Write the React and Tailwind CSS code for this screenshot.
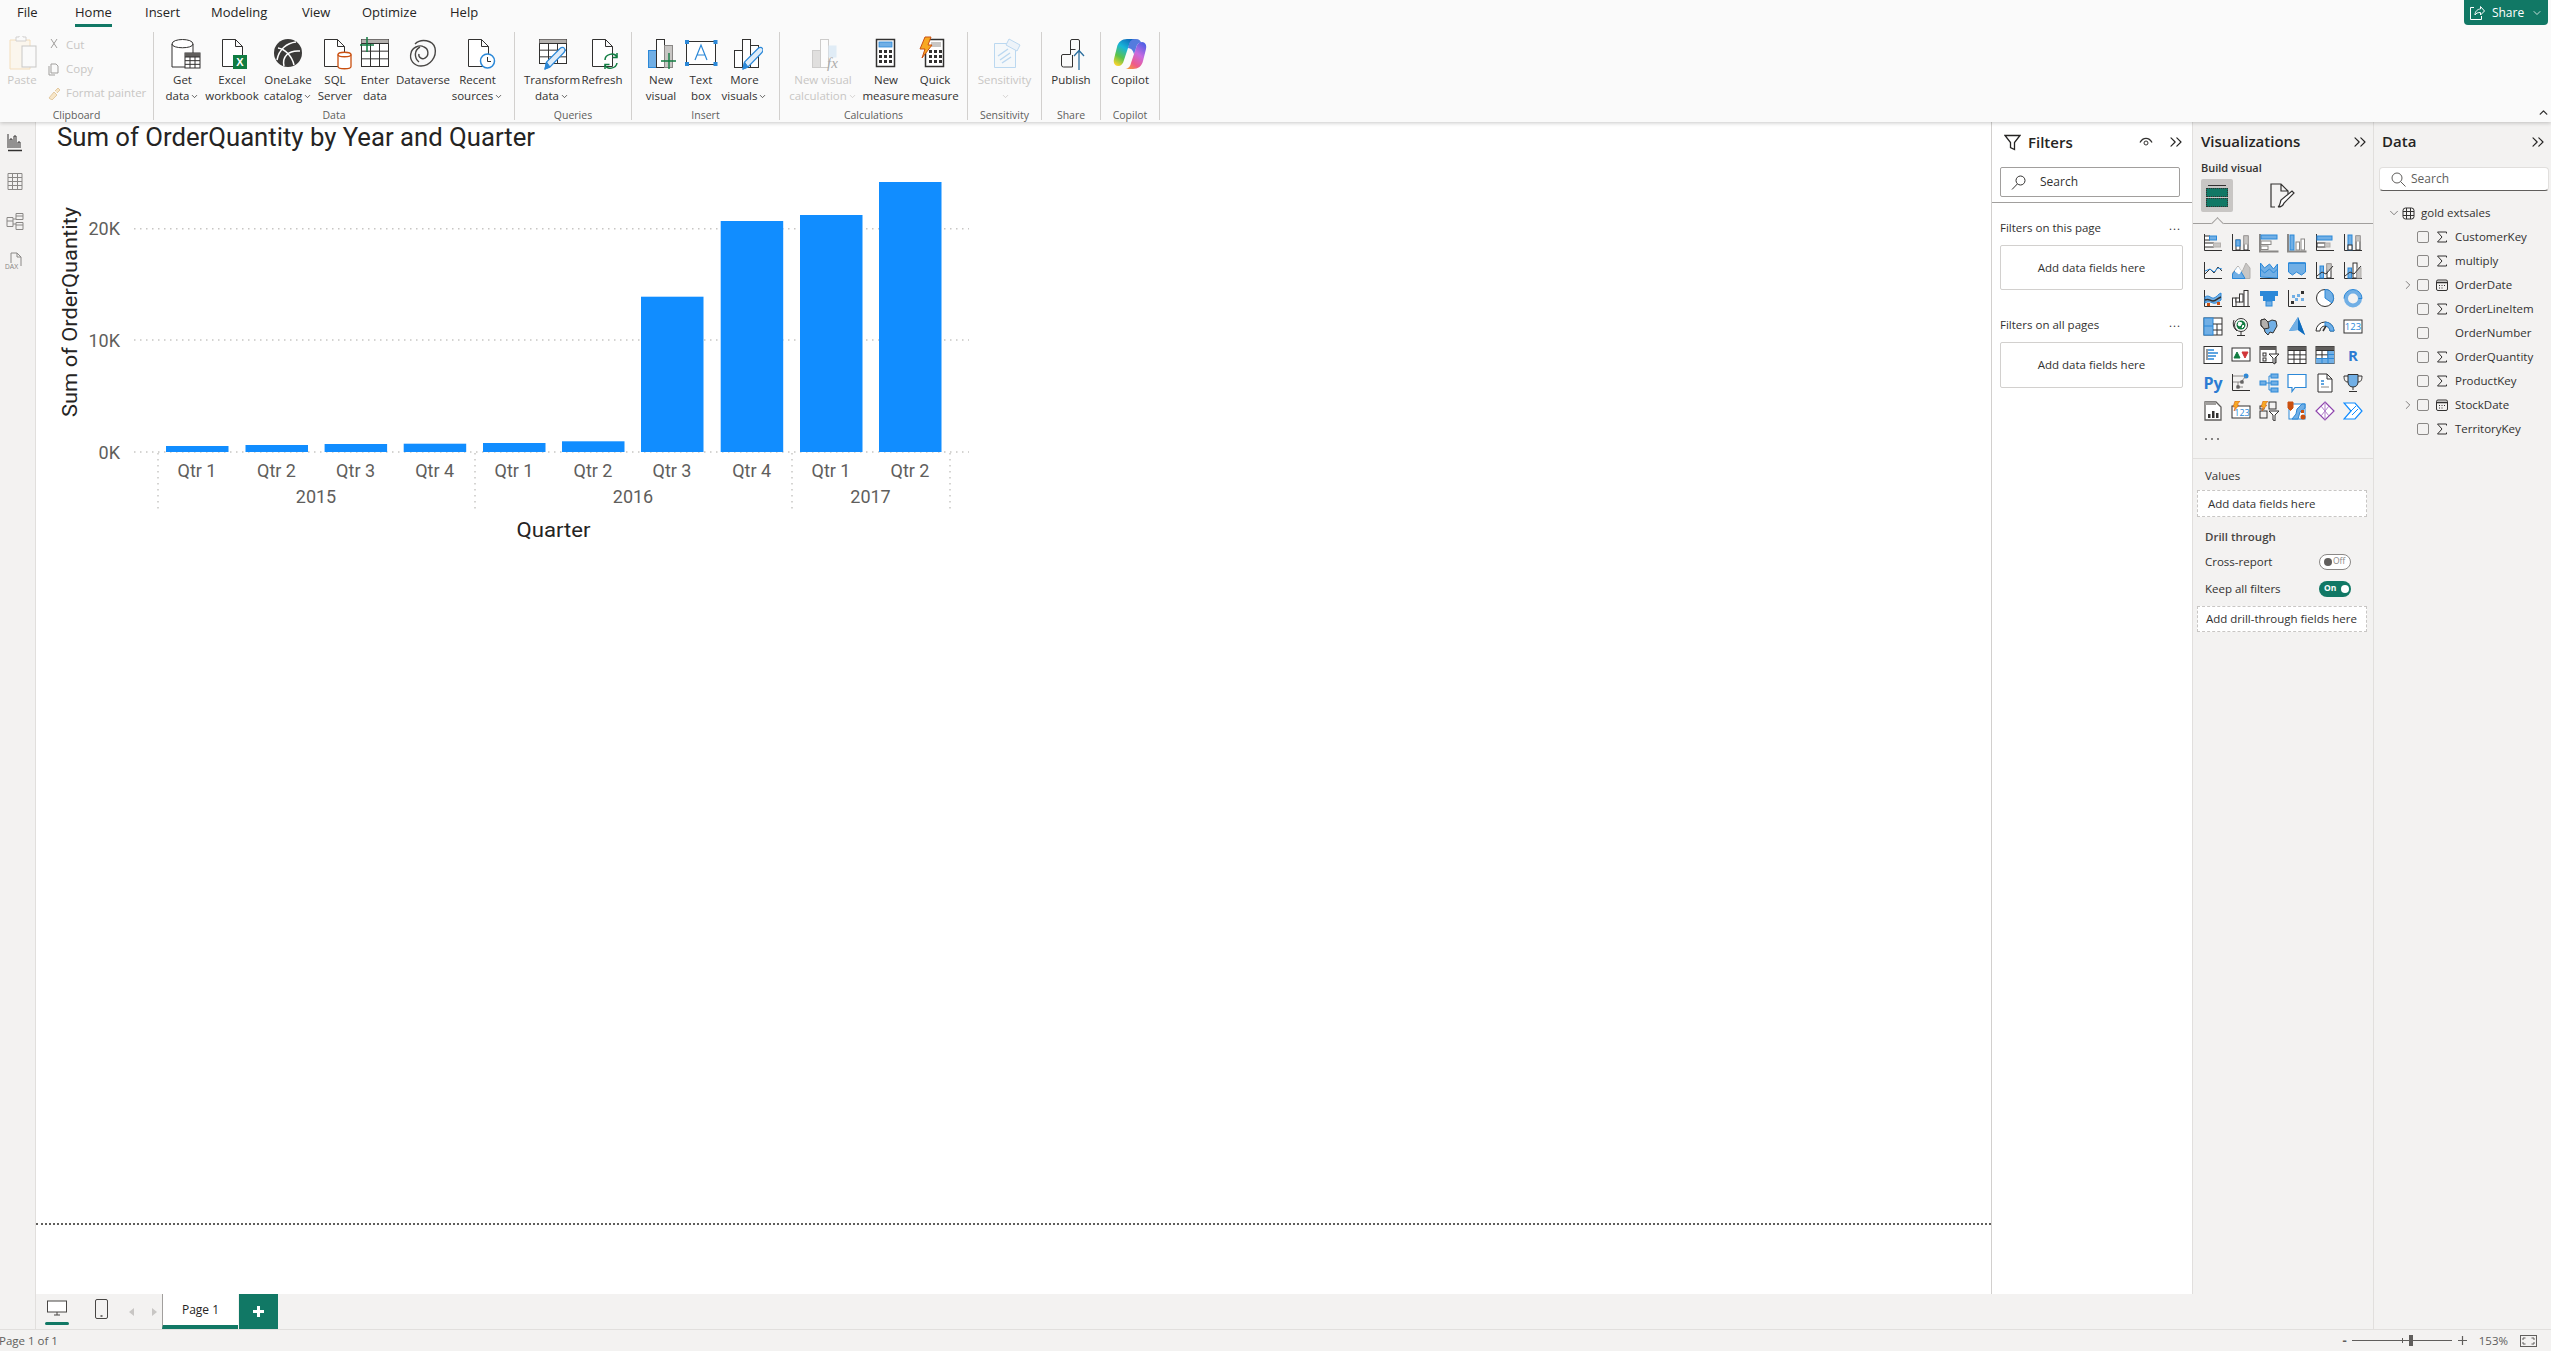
import React from "react";
import { ChevronsRight, ChevronRight, ChevronDown, ChevronUp } from "lucide-react";

const D = "#323130", B = "#2b88d8", L = "#71afe5", G = "#b3b0ad", W = "#ffffff";
const R = ({ x, y, w, h, f = "none", s = D, sw = 1, rx }) => <rect x={x} y={y} width={w} height={h} fill={f} stroke={s} strokeWidth={sw} rx={rx} />;
const P = ({ d, f = "none", s = D, sw = 1 }) => <path d={d} fill={f} stroke={s} strokeWidth={sw} />;

const Ic = ({ children, op }) => (
  <svg width="36" height="36" viewBox="0 0 36 36" fill="none" opacity={op}>{children}</svg>
);
const Doc = ({ x = 8.5 }) => <P d={`M${x} 3.5h13l7 7v20h-20z M${x + 13} 3.5v7h7`} f={W} />;
const TableG = ({ x, y, w, h, head = "#b3b0ad", c = 3, r = 3 }) => {
  const cols = Array.from({ length: c - 1 }, (_, i) => x + ((i + 1) * w) / c);
  const rows = Array.from({ length: r }, (_, i) => y + 4 + (i * (h - 4)) / r);
  return (
    <g>
      <R x={x} y={y} w={w} h={h} f={W} />
      <rect x={x} y={y} width={w} height={4} fill={head} />
      {cols.map((v) => <path key={v} d={`M${v} ${y + 4}V${y + h}`} stroke={D} />)}
      {rows.map((v) => <path key={v} d={`M${x} ${v}H${x + w}`} stroke={D} />)}
    </g>
  );
};
const Pencil = ({ dx = 0, dy = 0 }) => (
  <g transform={`translate(${dx} ${dy})`}>
    <P d="M10 33l1.500-7L25 12.500c1.500-1.500 3.500-1.500 4.500 0s.5 3-1 4.500L15 31z" f="#deecf9" s="#2b88d8" sw="1.200" />
    <P d="M10 33l1.500-7 3.500 5z" f="#2b88d8" s="#2b88d8" />
  </g>
);

const icons = {
  getdata: <Ic><P d="M7 8c0-6 21-6 21 0v23H7z" f={W} /><P d="M7 8c0 5 21 5 21 0" /><TableG x={20} y={17} w={15} h={15} head="#605e5c" /></Ic>,
  excel: <Ic><Doc /><rect x="19" y="19" width="14" height="14" fill="#107c41" /><text x="26" y="30" fontSize="11" fontWeight="700" fill={W} textAnchor="middle" fontFamily="Liberation Sans">X</text></Ic>,
  onelake: <Ic><circle cx="18" cy="17" r="14" fill="#3b3a39" /><P d="M7 24C9 13 17 7 26 6M14 30c-2-9 4-16 16-15M8 12c7 1 14 8 16 17" s={W} sw="1.500" /></Ic>,
  sql: <Ic><Doc x={7.5} /><P d="M21 18.500c0-3 13-3 13 0v12c0 3-13 3-13 0z" f={W} s="#ca5010" sw="1.300" /><P d="M21 18.500c0 3 13 3 13 0" s="#ca5010" sw="1.300" /></Ic>,
  enter: <Ic><TableG x={4.500} y={3.500} w={27} h={27} c={3} r={3} /><P d="M10 1v15M3 9h14" s="#107c41" sw="1.500" /></Ic>,
  dataverse: <Ic><P d="M10 8c6-6 18-4 20 4 2 9-5 18-14 18-7 0-12-6-10-13 1-5 8-9 13-6 5 2 5 9 1 11-3 2-7-1-6-4" s="#484644" sw="1.400" /><P d="M14 26c-5-4-5-12 1-15" s="#484644" sw="1.400" /></Ic>,
  recent: <Ic><Doc /><circle cx="27.500" cy="25" r="7" fill={W} stroke="#2b88d8" strokeWidth="1.500" /><P d="M27.500 21v4.500h3.500" s={D} /></Ic>,
  transform: <Ic><TableG x={5.500} y={3.500} w={27} h={24} c={3} r={3} /><Pencil dx={1} dy={0} /></Ic>,
  refresh: <Ic><Doc /><P d="M21 24c0-6 9-8 12-3M33 27c-1 6-10 7-12 2" s="#107c41" sw="1.500" /><P d="M33 17v4.500h-4.500M21 33v-4.500h4.500" s="#107c41" sw="1.500" /></Ic>,
  paste: <Ic op="0.55"><g transform="translate(3 -4)"><P d="M3 8h20v29H3z" f="#fdf3e3" s="#f0c98a" /><P d="M9 8V5h3c0-3 4-3 4 0h3v4H9z" f="#fafafa" s="#b3b0ad" /><R x={15} y={14} w={14} h={21} f="#fafafa" s="#a19f9d" /></g></Ic>,
  newvisual: <Ic><R x={5.500} y={14.500} w={8} h={17} f={L} s="#2b88d8" /><R x={13.500} y={3.500} w={8} h={28} f={W} /><R x={21.500} y={9.500} w={8} h={22} f="#c8c6c4" s="#8a8886" /><P d="M26 17v16M18 25h15" s="#107c41" sw="1.400" /></Ic>,
  textbox: <Ic><R x={3.500} y={5.500} w={29} h={23} f={W} /><rect x="2" y="4" width="4" height="4" fill="#2b88d8" /><rect x="30.500" y="4" width="4" height="4" fill="#2b88d8" /><rect x="2" y="26" width="4" height="4" fill="#2b88d8" /><rect x="30.500" y="26" width="4" height="4" fill="#2b88d8" /><P d="M12 24l6-15 6 15M14.500 19h7" s="#2b88d8" sw="1.200" /></Ic>,
  more: <Ic><R x={7.500} y={14.500} w={8} h={17} f={W} /><R x={15.500} y={3.500} w={8} h={28} f={W} /><R x={23.500} y={9.500} w={8} h={22} f={W} /><Pencil dx={6} dy={0} /></Ic>,
  calc: <Ic op="0.5"><R x={7.500} y={14.500} w={8} h={17} f="#c8c6c4" s="#a19f9d" /><R x={15.500} y={3.500} w={8} h={28} f={W} s="#a19f9d" /><path d="M23.500 9.500h8v12h-8z" fill="#c7e0f4" /><text x="22" y="32" fontSize="15" fontStyle="italic" fill="#605e5c" fontFamily="Liberation Serif">fx</text></Ic>,
  measure: <Ic><R x={8.500} y={3.500} w={18} h={27} f={W} sw="1.500" /><rect x="11" y="6" width="13" height="5" fill={L} stroke="#2b88d8" strokeWidth="0.800" />{[14, 19, 24].flatMap((y) => [11, 16, 21].map((x) => <rect key={`${x}${y}`} x={x} y={y} width="3" height="3" fill={D} />))}</Ic>,
  quick: <Ic><R x={8.500} y={3.500} w={18} h={27} f={W} sw="1.500" /><rect x="14" y="6" width="10" height="5" fill="#c8c6c4" />{[14, 19, 24].flatMap((y) => [12, 17, 22].map((x) => <rect key={`${x}${y}`} x={x} y={y} width="3" height="3" fill={D} />))}<P d="M8 1h6l-3 8h4L5 22l3-9H3z" f="#f7a823" s="#ca5010" /></Ic>,
  sens: <Ic op="0.45"><P d="M7.500 7.500h21v24h-21z" f="#eff6fc" s={L} /><P d="M11 20l10-7M13 24l10-7M15 27l9-6" s={L} sw="1.500" /><P d="M22 3l11 6-3 6-11-6z" f="#deecf9" s={L} /></Ic>,
  publish: <Ic><P d="M17.500 14V5a1.500 1.500 0 011.500-1.500h6a1.500 1.500 0 011.500 1.500v11" /><P d="M8.500 20a1.500 1.500 0 011.500-1.500h7.500v-5h5M8.500 20v9a2 2 0 002 2h9v-12" /><P d="M26 34V15M21 20l5-5.500 5 5.500" s="#2b6e9e" sw="1.300" /></Ic>,
  copilot: (
    <svg width="36" height="36" viewBox="0 0 36 36">
      <defs>
        <linearGradient id="cpa" x1="0.700" y1="0" x2="0.200" y2="1"><stop offset="0" stopColor="#0f6cbd" /><stop offset="0.350" stopColor="#18b6d8" /><stop offset="0.700" stopColor="#5cc24a" /><stop offset="1" stopColor="#f6d32c" /></linearGradient>
        <linearGradient id="cpb" x1="0.800" y1="0" x2="0.200" y2="1"><stop offset="0" stopColor="#4f5fe6" /><stop offset="0.400" stopColor="#c86be0" /><stop offset="0.750" stopColor="#ef5a8a" /><stop offset="1" stopColor="#f59a3b" /></linearGradient>
      </defs>
      <path d="M15 3h9c-4 0-6 2-7 6l-5 15c-1 4-3 6-6 6-3 0-5-3-4-7l3-12c1-5 5-8 10-8z" fill="url(#cpa)" />
      <path d="M21 33h-9c4 0 6-2 7-6l5-15c1-4 3-6 6-6 3 0 5 3 4 7l-3 12c-1 5-5 8-10 8z" fill="url(#cpb)" />
      <path d="M15 3h9c3 0 5 2 5 4-2-1-4 1-5 5l-2 6c-1-4-3-6-6-6l1-4c1-3 2-5 5-5z" fill="#2a5bd7" opacity="0.800" />
    </svg>
  ),
};

const Item = ({ w, icon, l1, l2, caret, off }) => (
  <div className={`${w} flex flex-col items-center shrink-0 pt-[4px]`}>
    <div className="h-[36px]">{icons[icon]}</div>
    <div className={`text-[11.5px] leading-[16px] whitespace-nowrap ${off ? "text-[#c8c6c4]" : "text-[#323130]"}`}>{l1}</div>
    <div className={`flex items-center h-[16px] text-[11.5px] leading-[16px] whitespace-nowrap ${off ? "text-[#c8c6c4]" : "text-[#323130]"}`}>
      {l2}
      {caret && <ChevronDown size={9} strokeWidth={2} className="ml-[1px]" />}
    </div>
  </div>
);

const Group = ({ w, pl = "", label, children }) => (
  <div className={`${w} shrink-0 h-[88px] border-r border-[#d2d0ce] flex flex-col`}>
    <div className={`h-[78px] flex ${pl}`}>{children}</div>
    <div className="h-[10px] leading-[11px] text-[10.5px] text-center text-[#605e5c]">{label}</div>
  </div>
);

const Ribbon = () => (
  <header className="relative z-10 h-[122px] shrink-0 bg-[#fafafa] shadow-[0_1px_4px_rgba(0,0,0,0.22)]">
    <div className="h-[32px] flex items-start pl-[17px] text-[13px] text-[#252423]">
      <div className="w-[58px] leading-[24px]">File</div>
      <div className="w-[70px]"><span className="inline-block h-[27px] leading-[24px] border-b-[3px] border-[#117865] font-medium">Home</span></div>
      <div className="w-[66px] leading-[24px]">Insert</div>
      <div className="w-[91px] leading-[24px]">Modeling</div>
      <div className="w-[60px] leading-[24px]">View</div>
      <div className="w-[88px] leading-[24px]">Optimize</div>
      <div className="leading-[24px]">Help</div>
      <div className="ml-auto mr-[3px] w-[84px] h-[25px] rounded-b-[4px] bg-[#117865] text-white flex items-center justify-center gap-[7px] text-[12px]">
        <svg width="16" height="16" viewBox="0 0 16 16" fill="none" stroke="#fff"><path d="M5 2.500H1.500v12h11V11M6 10c0-4 3-6 5.500-6V1.500L15.500 6l-4 4V7.500C9 7.500 7 8 6 10z" /></svg>
        <span>Share</span>
        <ChevronDown size={12} strokeWidth={1.500} />
      </div>
    </div>
    <div className="flex h-[88px]">
      <Group w="w-[154px]" label="Clipboard">
        <div className="w-[44px] flex flex-col items-center pt-[4px]">
          <div className="h-[36px]">{icons.paste}</div>
          <div className="text-[11.5px] leading-[16px] text-[#c8c6c4]">Paste</div>
        </div>
        <div className="flex flex-col text-[11.5px] text-[#c8c6c4] pt-[2px] pl-[4px] gap-[2px]">
          {[
            ["Cut", <P key="c" d="M3 1l6 9M9 1L3 10" s="#a19f9d" />],
            ["Copy", <P key="d" d="M3 2h5l2 2v7H3zM1 4v9h6" s="#a19f9d" />],
            ["Format painter", <P key="p" d="M1 12l5-6 3 3-5 5zM7 5l3-3 2 2-3 3" s="#e3c9a0" f="#f7e6c8" />],
          ].map(([t, ic]) => (
            <div key={t} className="flex items-center h-[22px] gap-[4px] whitespace-nowrap">
              <svg width="14" height="14" viewBox="0 0 14 14" fill="none">{ic}</svg>
              <span>{t}</span>
            </div>
          ))}
        </div>
      </Group>
      <Group w="w-[361px]" pl="pl-[4px]" label="Data">
        <Item w="w-[49px]" icon="getdata" l1="Get" l2="data" caret />
        <Item w="w-[50px]" icon="excel" l1="Excel" l2="workbook" />
        <Item w="w-[62px]" icon="onelake" l1="OneLake" l2="catalog" caret />
        <Item w="w-[32px]" icon="sql" l1="SQL" l2="Server" />
        <Item w="w-[48px]" icon="enter" l1="Enter" l2="data" />
        <Item w="w-[48px]" icon="dataverse" l1="Dataverse" />
        <Item w="w-[61px]" icon="recent" l1="Recent" l2="sources" caret />
      </Group>
      <Group w="w-[117px]" pl="pl-[5px]" label="Queries">
        <Item w="w-[64px]" icon="transform" l1="Transform" l2="data" caret />
        <Item w="w-[36px]" icon="refresh" l1="Refresh" />
      </Group>
      <Group w="w-[148px]" pl="pl-[9px]" label="Insert">
        <Item w="w-[40px]" icon="newvisual" l1="New" l2="visual" />
        <Item w="w-[40px]" icon="textbox" l1="Text" l2="box" />
        <Item w="w-[47px]" icon="more" l1="More" l2="visuals" caret />
      </Group>
      <Group w="w-[188px]" pl="pl-[6px]" label="Calculations">
        <Item w="w-[74px]" icon="calc" l1="New visual" l2="calculation" caret off />
        <Item w="w-[52px]" icon="measure" l1="New" l2="measure" />
        <Item w="w-[46px]" icon="quick" l1="Quick" l2="measure" />
      </Group>
      <Group w="w-[74px]" pl="justify-center" label="Sensitivity">
        <Item w="w-[70px]" icon="sens" l1="Sensitivity" l2="" caret off />
      </Group>
      <Group w="w-[59px]" pl="justify-center" label="Share">
        <Item w="w-[50px]" icon="publish" l1="Publish" />
      </Group>
      <Group w="w-[59px]" pl="justify-center" label="Copilot">
        <Item w="w-[50px]" icon="copilot" l1="Copilot" />
      </Group>
      <div className="ml-auto self-end pr-[1px] pb-[1px]"><ChevronUp size={13} strokeWidth={2.500} className="text-[#323130]" /></div>
    </div>
  </header>
);

const Rail = () => (
  <div className="w-[36px] shrink-0 bg-[#f3f2f1] border-r border-[#e1dfdd] flex flex-col items-center pr-[5px] pt-[10px] gap-[19px]">
    <svg width="20" height="20" viewBox="0 0 20 20" fill="none" stroke="#323130"><path d="M3 2v14M5 16V7h2v9M9 16V4h2v12M13 16v-6h2v6" /><path d="M3 18.500h14" strokeWidth="1.500" /></svg>
    <svg width="20" height="21" viewBox="0 0 20 21" fill="none" stroke="#8a8886"><path d="M3 2.500h14v16H3zM3 6.500h14M3 10.500h14M3 14.500h14M7.500 2.500v16M12.500 2.500v16" /></svg>
    <svg width="20" height="21" viewBox="0 0 20 21" fill="none" stroke="#8a8886"><path d="M2 6.500h6v9H2zM11 2.500h7v6h-7zM11 11.500h7v7h-7zM2 10h6M11 5h7M11 14h7M8 8h3M8 13h3" /></svg>
    <svg width="20" height="20" viewBox="0 0 20 20" fill="none" stroke="#8a8886"><path d="M6 12V2h6l4 4v9M12 2v4h4" /><text x="0" y="18" fontSize="6.500" fill="#8a8886" stroke="none" fontFamily="Liberation Sans">DAX</text></svg>
  </div>
);

const bars = [
  [166, 446, "Qtr 1"], [245.500, 445, "Qtr 2"], [324.600, 444, "Qtr 3"], [403.700, 443.700, "Qtr 4"],
  [483, 443, "Qtr 1"], [562, 441.300, "Qtr 2"], [641, 296.700, "Qtr 3"], [720.700, 221, "Qtr 4"],
  [800, 215, "Qtr 1"], [879, 182, "Qtr 2"],
];

const Chart = () => (
  <svg width="1000" height="420" viewBox="36 122 1000 420" className="block" fontFamily="Roboto, sans-serif">
    <text x="57" y="146" fontSize="25" fill="#252423" textLength="478" lengthAdjust="spacingAndGlyphs">Sum of OrderQuantity by Year and Quarter</text>
    <text transform="translate(77 312) rotate(-90)" fontSize="19.500" fill="#252423" textAnchor="middle" textLength="210" lengthAdjust="spacingAndGlyphs">Sum of OrderQuantity</text>
    {[[228.700, "20K"], [340, "10K"], [452, "0K"]].map(([y, t]) => (
      <g key={t}>
        <path d={`M134 ${y}H969`} stroke="#c8c6c4" strokeWidth="1.500" strokeDasharray="1.500 4.500" />
        <text x="120" y={y + 6.500} fontSize="18" fill="#605e5c" textAnchor="end">{t}</text>
      </g>
    ))}
    {[158, 475, 792, 950].map((x) => <path key={x} d={`M${x} 453V513`} stroke="#c8c6c4" strokeWidth="1.500" strokeDasharray="1.500 4.500" />)}
    {bars.map(([x, y, t], i) => (
      <g key={i}>
        <rect x={x} y={y} width="62.500" height={452 - y} fill="#118dff" />
        <text x={x + 31} y="477" fontSize="18" fill="#605e5c" textAnchor="middle">{t}</text>
      </g>
    ))}
    {[[316, "2015"], [633, "2016"], [870.500, "2017"]].map(([x, t]) => <text key={t} x={x} y="503" fontSize="18" fill="#605e5c" textAnchor="middle">{t}</text>)}
    <text x="553.500" y="537" fontSize="20" fill="#252423" textAnchor="middle" textLength="74" lengthAdjust="spacingAndGlyphs">Quarter</text>
  </svg>
);

const Filters = () => (
  <aside className="w-[201px] shrink-0 bg-white border-l border-[#d2d0ce]">
    <div className="h-[40px] flex items-center pl-[12px] pr-[6px] text-[#252423]">
      <svg width="17" height="17" viewBox="0 0 17 17" fill="none" stroke="#252423" strokeWidth="1.300"><path d="M1 1.500h15l-5.500 7v7l-4-2v-5z" /></svg>
      <span className="ml-[7px] text-[15px] font-semibold">Filters</span>
      <svg className="ml-auto mr-[12px]" width="16" height="12" viewBox="0 0 16 12" fill="none" stroke="#323130"><path d="M2 6.500C5 1 11 1 14 6.500" strokeWidth="1.300" /><circle cx="8" cy="7" r="2" /></svg>
      <ChevronsRight size={20} strokeWidth={1.400} className="text-[#252423]" />
    </div>
    <div className="mt-[5px] mx-[8px] w-[180px] h-[30px] rounded-[2px] border border-[#a19f9d] flex items-center pl-[10px] text-[12px] text-[#323130]">
      <svg width="15" height="15" viewBox="0 0 15 15" fill="none" stroke="#323130"><circle cx="9.500" cy="5.500" r="4.500" /><path d="M6.300 9L1 14.500" /></svg>
      <span className="ml-[14px]">Search</span>
    </div>
    <div className="mt-[5px] h-px bg-[#a19f9d]" />
    <div className="mt-[16px] h-[18px] px-[8px] flex justify-between items-center text-[11.5px] text-[#323130]">
      <span>Filters on this page</span><span className="tracking-[1px] -mt-[4px] mr-[3px]">...</span>
    </div>
    <div className="mt-[8px] mx-[8px] w-[183px] h-[45px] bg-white border border-[#d2d0ce] rounded-[2px] flex items-center justify-center text-[11.5px] text-[#323130]">Add data fields here</div>
    <div className="mt-[26px] h-[18px] px-[8px] flex justify-between items-center text-[11.5px] text-[#323130]">
      <span>Filters on all pages</span><span className="tracking-[1px] -mt-[4px] mr-[3px]">...</span>
    </div>
    <div className="mt-[8px] mx-[8px] w-[183px] h-[46px] bg-white border border-[#d2d0ce] rounded-[2px] flex items-center justify-center text-[11.5px] text-[#323130]">Add data fields here</div>
  </aside>
);

const Ax = () => <P d="M1.500 1v16.500H19" />;
const viz = [
  <><Ax /><R x={1.500} y={3} w={5} h={4} f={W} /><R x={6.500} y={3} w={7} h={4} f={L} s={B} /><R x={1.500} y={10} w={9} h={4} f={W} /><R x={10.500} y={10} w={7} h={4} f="#c8c6c4" s={G} /></>,
  <><Ax /><R x={5} y={7} w={4} h={10} f={W} /><R x={5} y={7} w={4} h={6} f={L} s={B} /><R x={13} y={3} w={4} h={14} f={W} /><R x={13} y={3} w={4} h={8} f="#c8c6c4" s={G} /></>,
  <><P d="M1 1v17.500h18.500" s="#8a8886" sw={2} /><rect x="2" y="2" width="16" height="4" fill={L} stroke={B} /><R x={2} y={8} w={10} h={3.500} f="#fff" s="#8a8886" /><R x={2} y={13} w={7} h={3.500} f="#fff" s="#8a8886" /></>,
  <><P d="M1 1v17.500h18.500" s="#8a8886" sw={2} /><rect x="3" y="2" width="4" height="15" fill={L} stroke={B} /><R x={9} y={9} w={3.500} h={8} f="#fff" s="#8a8886" /><R x={14} y={6} w={3.500} h={11} f="#fff" s="#8a8886" /></>,
  <><Ax /><rect x="2" y="3" width="15" height="4" fill={L} stroke={B} /><R x={2} y={10} w={8} h={4} f="#fff" /><R x={10} y={10} w={5} h={4} f="#c8c6c4" s={G} /></>,
  <><Ax /><rect x="5" y="2" width="4" height="15" fill={L} stroke={B} /><R x={5} y={12} w={4} h={5} f="#fff" /><R x={13} y={3} w={4} h={14} f="#fff" /><R x={13} y={3} w={4} h={5} f="#c8c6c4" s={G} /></>,
  <><Ax /><P d="M2 13l5-5 4 4 4-6 4 4" s={D} /><P d="M2 10l5-2 4 3 4-4 4 1" s={B} /></>,
  <><P d="M1 17.500h18" /><P d="M1.500 17.500V12L7 5l4 6 4-9 4 5v10.500z" f="#c8c6c4" s={G} /><P d="M1.500 17.500V13L7 6l5 8 2 3.500z" f={L} s={B} /><P d="M4 10l3-4 3 4-2 3z" f={W} s={W} /></>,
  <><P d="M1 17.500h18" /><P d="M1.500 16V2l4 5 5-4 4 5 4-5v14z" f={L} s={B} /><P d="M1.500 8l4 4 5-4 4 4 4-4" s={B} /></>,
  <><P d="M1 17.500h18" /><P d="M1.500 2h17v9l-4 3-5-3-4 3-4-3z" f={L} s={B} /><P d="M1.500 2h17" s={B} sw={1.500} /></>,
  <><Ax /><rect x="5" y="5" width="3.500" height="12" fill={L} stroke={B} /><R x={12} y={3} w={4} h={14} f="#fff" /><R x={12} y={3} w={4} h={6} f="#c8c6c4" s={G} /><P d="M2 15l5-4 4 2 7-8" /></>,
  <><Ax /><rect x="5" y="7" width="3.500" height="10" fill={L} stroke={B} /><R x={10} y={2} w={4} h={15} f="#fff" /><R x={14} y={7} w={4} h={10} f="#c8c6c4" s={G} /><P d="M2 15l5-4 4 2 7-8" /></>,
  <><Ax /><P d="M2 8c4-3 6 2 9 1s4-4 7-5v7c-3 2-5 4-8 3s-4-2-8 0z" f={L} s={B} /><P d="M2 11c4-2 5 1 8 1s5-3 8-4" s={D} sw={1.500} /><rect x="4" y="14" width="3" height="3" fill="#ca5010" /><rect x="14" y="13" width="3" height="3" fill="#ca5010" /></>,
  <><P d="M1 17.500h18" /><R x={1.500} y={9} w={3.500} h={8.500} f="#fff" /><R x={5} y={9} w={3.500} h={4} f="#fff" /><R x={8.500} y={5} w={3.500} h={8} f="#fff" /><R x={13} y={1.500} w={4} h={16} f="#fff" /></>,
  <><rect x="1" y="2" width="18" height="5" fill={B} /><rect x="4" y="7" width="12" height="5" fill={B} /><rect x="7" y="12" width="6" height="5" fill={L} stroke={B} /></>,
  <><Ax /><rect x="14" y="2" width="3" height="3" fill={D} /><rect x="10" y="5" width="3" height="3" fill={L} /><rect x="5" y="6" width="3" height="3" fill={L} /><rect x="14" y="9" width="3" height="3" fill={L} /><rect x="8" y="9" width="3" height="3" fill={L} /><rect x="4" y="12" width="3" height="3" fill={D} /></>,
  <><circle cx="10" cy="9" r="8.500" fill="#fff" stroke={D} /><P d="M10 9V.500A8.500 8.500 0 0117 14z" f={L} s={B} /></>,
  <><circle cx="10" cy="9.500" r="7" fill="none" stroke={L} strokeWidth="4" /><P d="M10 .500a9 9 0 019 9h-3.500" s={B} /><P d="M1 9.500a9 9 0 019-9" s={B} /></>,
  <><R x={1} y={1} w={18} h={17} f="#fff" /><rect x="1" y="1" width="9" height="17" fill={L} stroke={B} /><P d="M1 9h9" s={B} /><P d="M10 7h9M14 7v11M10 13h9" /></>,
  <><circle cx="10" cy="8" r="6.500" fill="#fff" stroke={D} /><circle cx="10" cy="8" r="4.500" fill="#107c41" /><P d="M8 5l3 1-2 3-2-1zM12 8l1 1-2 2z" f="#fff" s="#fff" /><P d="M10 15v3M6 18.500h8M3 3a9 9 0 003 11" /></>,
  <><P d="M2 3l4-1 3 3 4-2 4 1 1 5-4 7-3-1-2 3-3-3-1-4-3-2z" f={L} s={D} /><P d="M2 3l4-1 3 3 1 6-5 1-3-4z" f={G} s={D} /></>,
  <><P d="M11 0L18 18 11 13 2 14z" f={B} s="none" /><P d="M11 0v13l7 5z" f="#0f6cbd" s="none" /><P d="M11 0L2 14l9-1z" f={L} s="none" /></>,
  <><P d="M1 14a9 9 0 0118 0h-4a5 5 0 00-10 0z" f="#fff" /><P d="M10 5a9 9 0 019 9h-4a5 5 0 00-5-5z" f={L} s={B} /><P d="M8 14l3-5" sw={1.500} /></>,
  <><R x={1} y={3} w={18} h={13} f="#fff" /><text x="10" y="13" fontSize="9.500" textAnchor="middle" fill={B} fontFamily="Open Sans">123</text></>,
  <><R x={1} y={1.500} w={18} h={17} f="#fff" /><path d="M5 5h6M5 8h10M5 11h8M5 14h6" stroke={B} strokeWidth="1.500" /><path d="M4 4v11" stroke={D} /></>,
  <><R x={1} y={3} w={18} h={13} f="#fff" /><P d="M3 13l3-6 3 6z" f="#107c41" s="#107c41" /><P d="M11 7h6l-3 6z" f="#d13438" s="#d13438" /></>,
  <><R x={1} y={1.500} w={16} h={16} f="#fff" /><rect x="1" y="1.500" width="16" height="3.500" fill="#605e5c" /><R x={4} y={8} w={3} h={3} /><R x={4} y={13} w={3} h={3} /><P d="M10 9h10l-4 4v6l-2-1v-5z" f="#fff" /></>,
  <><TableG x={1} y={1.500} w={18} h={17} head="#605e5c" c={3} r={3} /></>,
  <><TableG x={1} y={1.500} w={18} h={17} head="#605e5c" c={3} r={3} /><rect x="13" y="6" width="6" height="12" fill={L} /><rect x="1" y="13" width="18" height="5.500" fill={L} /><P d="M7 13v5.500M13 6v12.500M13 9.500h6M1 13.500h18" s={B} /></>,
  <><text x="10" y="15.500" fontSize="15" fontWeight="700" fill="#2b7cd3" textAnchor="middle" fontFamily="Open Sans">R</text></>,
  <><text x="10" y="15.500" fontSize="16" fontWeight="700" fill="#2b7cd3" textAnchor="middle" fontFamily="Open Sans">Py</text></>,
  <><Ax /><circle cx="15" cy="3" r="2.500" fill={B} /><P d="M2 3h10M2 9h8l5-6M7 9v5h5" s="#8a8886" /><R x={10} y={8} w={2} h={2} f="#fff" /><R x={6} y={13} w={2} h={2} f="#fff" /></>,
  <><rect x="1" y="8" width="6" height="4" fill={L} stroke={B} /><rect x="12" y="1" width="7" height="4" fill={L} stroke={B} /><rect x="12" y="8" width="7" height="4" fill={L} stroke={B} /><rect x="12" y="15" width="7" height="4" fill={L} stroke={B} /><P d="M7 10h5M10 3h2M10 17h2M10 3v14" s={B} /></>,
  <><P d="M1 1.500h18v13H8l-3 4v-4H1z" f="#fff" s={B} sw={1.200} /></>,
  <><P d="M3 1h9l5 5v13H3zM12 1v5h5" f="#fff" /><path d="M6 8h3M6 11h3" stroke={B} strokeWidth="1.500" /><path d="M6 14h8" stroke="#8a8886" /></>,
  <><P d="M5 1.500h10V9c0 3-2 5-5 5s-5-2-5-5z" f={L} s={D} /><P d="M5 3H1c0 4 1 6 4 6M15 3h4c0 4-1 6-4 6M10 14v3M6 18.500h8" /></>,
  <><P d="M2 1h11l5 5v13H2z" f="#fff" s="#605e5c" sw={1.300} /><rect x="5" y="13" width="2.500" height="4" fill="#323130" /><rect x="9" y="10" width="2.500" height="7" fill="#323130" /><rect x="13" y="12" width="2.500" height="5" fill="#323130" /><rect x="2" y="1" width="11" height="3" fill="#a19f9d" /></>,
  <><R x={1} y={5} w={18} h={12} f="#fff" /><text x="11" y="15" fontSize="9" textAnchor="middle" fill={B} fontFamily="Open Sans">123</text><P d="M4 0h5L6 4h2L3 10l1-4H2z" f="#f7a823" s="#ca5010" sw={0.500} /></>,
  <><R x={10} y={1} w={7} h={7} /><R x={1} y={10} w={7} h={7} /><R x={1} y={5} w={4} h={3} /><P d="M10 10h10l-4 4v6l-2-1v-5z" f="#fff" /><P d="M4 0h5L6 4h2L3 10l1-4H2z" f="#f7a823" s="#ca5010" sw={0.500} /></>,
  <><R x={2} y={3} w={16} h={15} f="#fff" s={B} /><P d="M5 18l4-5 1-5 5-5h3v4l-5 4-2 7z" f={L} s={B} /><P d="M1 1h5v6L3.500 9.500 1 7z" f="#ca5010" s="#ca5010" /><circle cx="16" cy="16" r="2.500" fill="#ca5010" /><rect x="14" y="9" width="3" height="3" fill="#ca5010" /></>,
  <><P d="M10 1l9 9-9 9-9-9z" f="#fff" s="#8e44ad" sw={1.200} /><P d="M10 1v18M6 5l8 10M14 5L6 15" s="#b180c9" /></>,
  <><P d="M1 2h11l7 8-7 8H1l7-8z" f="#fff" s="#0f8bff" sw={1.200} /><P d="M6 12l7-7M9 14l6-6" s="#0f8bff" /></>,
  <><circle cx="3" cy="10" r="1" fill="#605e5c" /><circle cx="9" cy="10" r="1" fill="#605e5c" /><circle cx="15" cy="10" r="1" fill="#605e5c" /></>,
];

const Toggle = ({ on }) => on ? (
  <div className="ml-auto mr-[22px] w-[32px] h-[16px] rounded-full bg-[#117865] flex items-center justify-between pl-[5px] pr-[2px] text-white text-[8.5px] font-bold">
    <span>On</span><span className="w-[8px] h-[8px] rounded-full bg-white" />
  </div>
) : (
  <div className="ml-auto mr-[22px] w-[32px] h-[16px] rounded-full bg-white border border-[#8a8886] flex items-center pl-[4px] gap-[1px] text-[#8a8886] text-[8.5px]">
    <span className="w-[8px] h-[8px] rounded-full bg-[#605e5c]" /><span>Off</span>
  </div>
);

const Viz = () => (
  <aside className="w-[181px] shrink-0 bg-[#f3f2f1] border-l border-[#e1dfdd] text-[#323130]">
    <div className="h-[39px] flex items-center pl-[8px] pr-[3px]">
      <span className="text-[15px] font-semibold text-[#252423]">Visualizations</span>
      <ChevronsRight size={20} strokeWidth={1.400} className="ml-auto text-[#252423]" />
    </div>
    <div className="h-[14px] leading-[14px] pl-[8px] text-[11px] font-semibold">Build visual</div>
    <div className="mt-[4px] h-[33px] flex">
      <div className="ml-[8px] w-[32px] h-[33px] rounded-[2px] bg-[#c8c6c4] flex flex-col items-center justify-center gap-[1px]">
        <span className="w-[18px] h-px bg-[#323130] mb-[1px]" />
        <span className="w-[22px] h-[9px] bg-[#117865] border border-dotted border-[#323130]" />
        <span className="w-[22px] h-[9px] bg-[#117865] border border-dotted border-[#323130]" />
      </div>
      <svg className="ml-[37px] mt-[4px]" width="26" height="25" viewBox="0 0 26 25" fill="none" stroke="#323130"><path d="M5 24H1V1h10l7 7v3M11 1v7h7" strokeWidth="1.200" /><path d="M8 24c3 0 5-1 6-4l10-10-2-2-11 9c-1 3-1 6-3 7z" fill="#fff" strokeWidth="1.200" /></svg>
    </div>
    <div className="relative mt-[11px] h-px bg-[#a19f9d]">
      <span className="absolute left-[20px] -top-[4px] w-[9px] h-[9px] rotate-45 bg-[#f3f2f1] border-l border-t border-[#a19f9d]" />
    </div>
    <div className="pl-[6px] pt-[5px] grid grid-cols-[repeat(6,28px)] auto-rows-[28px] h-[234px]">
      {viz.map((c, i) => (
        <div key={i} className="flex items-center justify-center">
          <svg width="20" height="20" viewBox="0 0 20 20" fill="none">{c}</svg>
        </div>
      ))}
    </div>
    <div className="h-px bg-[#e1dfdd]" />
    <div className="h-[31px] pl-[12px] pt-[9px] text-[11.5px] leading-[16px]">Values</div>
    <div className="ml-[4px] w-[170px] h-[27px] bg-white border border-dashed border-[#c8c6c4] flex items-center pl-[10px] text-[11.5px]">Add data fields here</div>
    <div className="h-[20px] mt-[10px] pl-[12px] text-[11.5px] leading-[20px] font-semibold text-[#484644]">Drill through</div>
    <div className="h-[27px] mt-[1px] pl-[12px] flex items-center text-[11.5px]">Cross-report<Toggle /></div>
    <div className="h-[27px] pl-[12px] flex items-center text-[11.5px]">Keep all filters<Toggle on /></div>
    <div className="mt-[4px] ml-[4px] w-[170px] h-[26px] bg-white border border-dashed border-[#c8c6c4] flex items-center pl-[8px] text-[11.5px] whitespace-nowrap">Add drill-through fields here</div>
  </aside>
);

const Sigma = () => <svg width="12" height="12" viewBox="0 0 12 12" fill="none" stroke="#323130"><path d="M10.500 2.500V1H1.500l4.500 5-4.500 5h9V9.500" /></svg>;
const Cal = () => <svg width="12" height="12" viewBox="0 0 12 12" fill="none" stroke="#323130"><rect x="0.500" y="1" width="11" height="10.500" rx="1.500" /><path d="M.5 3.500h11" strokeWidth="1.500" /><path d="M3 6.500h1.500M5.500 6.500H7M8 6.500h1.500M3 9h1.500M5.500 9H7" strokeDasharray="1 0.500" /></svg>;
const fields = [
  ["CustomerKey", "s"], ["multiply", "s"], ["OrderDate", "c", true], ["OrderLineItem", "s"], ["OrderNumber", ""],
  ["OrderQuantity", "s"], ["ProductKey", "s"], ["StockDate", "c", true], ["TerritoryKey", "s"],
];

const Data = () => (
  <aside className="w-[178px] shrink-0 bg-[#f3f2f1] border-l border-[#e1dfdd] text-[#323130]">
    <div className="h-[39px] flex items-center pl-[8px] pr-[3px]">
      <span className="text-[15px] font-semibold text-[#252423]">Data</span>
      <ChevronsRight size={20} strokeWidth={1.400} className="ml-auto text-[#252423]" />
    </div>
    <div className="mt-[6px] ml-[5px] w-[170px] h-[24px] rounded-[4px] bg-white border border-[#e1dfdd] border-b-[#605e5c] flex items-center pl-[11px] text-[12px] text-[#605e5c]">
      <svg width="15" height="15" viewBox="0 0 15 15" fill="none" stroke="#605e5c"><circle cx="6" cy="6" r="5" /><path d="M9.500 9.500l5 5" /></svg>
      <span className="ml-[5px]">Search</span>
    </div>
    <div className="mt-[10px] h-[24px] flex items-center pl-[13px] text-[11.5px]">
      <ChevronDown size={14} strokeWidth={1} />
      <svg className="ml-[1px]" width="13" height="13" viewBox="0 0 13 13" fill="none" stroke="#323130"><rect x="1" y="1" width="11" height="11" rx="2.500" /><path d="M1 4.500h11M1 8.500h11M4.500 1v11M8.500 1v11" /></svg>
      <span className="ml-[6px]">gold extsales</span>
    </div>
    {fields.map(([n, k, ex]) => (
      <div key={n} className="h-[24px] flex items-center pl-[28px] text-[11.5px]">
        <span className="w-[16px] -ml-[1px] flex">{ex && <ChevronRight size={14} strokeWidth={1} />}</span>
        <span className="w-[12px] h-[12px] shrink-0 rounded-[2px] bg-[#f3f2f1] border border-[#8a8886]" />
        <span className="w-[14px] ml-[7px] flex justify-start">{k === "s" ? <Sigma /> : k === "c" ? <Cal /> : null}</span>
        <span className="ml-[5px] whitespace-nowrap">{n}</span>
      </div>
    ))}
  </aside>
);

const TabBar = () => (
  <div className="h-[35px] shrink-0 bg-[#f3f2f1] flex">
    <div className="ml-[9px] w-[24px] flex flex-col items-center">
      <svg className="mt-[6px]" width="20" height="16" viewBox="0 0 20 16" fill="none" stroke="#484644"><rect x="0.500" y="1" width="19" height="11" fill="#fff" /><path d="M7 15h6M10 12v3" /></svg>
      <span className="mt-[6px] w-[24px] h-[3px] rounded-full bg-[#117865]" />
    </div>
    <svg className="ml-[26px] mt-[5px]" width="13" height="20" viewBox="0 0 13 20" fill="none" stroke="#484644"><rect x="0.500" y="0.500" width="12" height="19" rx="1.500" /><path d="M5.500 17h2" strokeWidth="1.500" /></svg>
    <svg className="ml-[20px] mt-[13px]" width="8" height="10" viewBox="0 0 8 10"><path d="M6 1v8L1 5z" fill="#c8c6c4" /></svg>
    <svg className="ml-[14px] mt-[13px]" width="8" height="10" viewBox="0 0 8 10"><path d="M2 1v8l5-4z" fill="#c8c6c4" /></svg>
    <div className="ml-[4px] w-[76px] h-[35px] bg-white border-l border-[#a19f9d] border-b-[4px] border-b-[#117865] flex items-center justify-center text-[12px] text-[#252423]">Page 1</div>
    <div className="ml-px w-[39px] h-[35px] bg-[#117865] flex items-center justify-center">
      <svg width="13" height="13" viewBox="0 0 13 13"><path d="M6.500 1v11M1 6.500h11" stroke="#fff" strokeWidth="3" /></svg>
    </div>
    <div className="ml-auto w-[178px] border-l border-[#e1dfdd]" />
  </div>
);

const Status = () => (
  <footer className="h-[22px] shrink-0 bg-[#f3f2f1] border-t border-[#e1dfdd] flex items-center text-[#605e5c]">
    <span className="-ml-[1px] text-[11.5px]">Page 1 of 1</span>
    <div className="ml-auto flex items-center">
      <span className="text-[13px] font-bold leading-none">-</span>
      <div className="relative ml-[5px] w-[100px] h-[1px] bg-[#605e5c]">
        <span className="absolute left-[50px] -top-[2px] w-px h-[5px] bg-[#605e5c]" />
        <span className="absolute left-[57px] -top-[5px] w-[4px] h-[11px] bg-[#605e5c]" />
      </div>
      <svg className="ml-[6px]" width="9" height="9" viewBox="0 0 9 9"><path d="M4.500 0v9M0 4.500h9" stroke="#605e5c" strokeWidth="1.200" /></svg>
      <span className="ml-[12px] text-[11.5px]">153%</span>
      <svg className="ml-[12px] mr-[14px]" width="17" height="12" viewBox="0 0 17 12" fill="none"><rect x="0.500" y="0.500" width="16" height="11" stroke="#605e5c" /><path d="M3 5V3h2.500M14 5V3h-2.500M3 7v2h2.500M14 7v2h-2.500" stroke="#605e5c" /></svg>
    </div>
  </footer>
);

export default function App() {
  return (
    <div className="w-[2551px] h-[1351px] overflow-hidden flex flex-col bg-white font-['Open_Sans','Noto_Sans',sans-serif]">
      <Ribbon />
      <div className="h-[1207px] flex">
        <Rail />
        <div className="flex-1 min-w-0 flex flex-col">
          <div className="h-[1172px] flex">
            <main className="flex-1 min-w-0 bg-white">
              <div className="h-[1103px] border-b-2 border-dotted border-[#605e5c]">
                <Chart />
              </div>
            </main>
            <Filters />
            <Viz />
            <Data />
          </div>
          <TabBar />
        </div>
      </div>
      <Status />
    </div>
  );
}
